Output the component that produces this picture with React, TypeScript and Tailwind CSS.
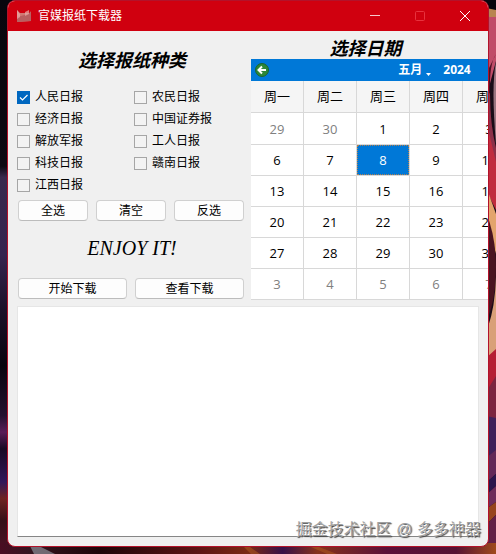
import React, { useState } from 'react';
import { clsx } from 'clsx';

const papers = [
    '人民日报', '农民日报',
    '经济日报', '中国证券报',
    '解放军报', '工人日报',
    '科技日报', '赣南日报',
    '江西日报',
];

const weekdays = ['周一', '周二', '周三', '周四', '周五', '周六', '周日'];
const months = ['一月', '二月', '三月', '四月', '五月', '六月', '七月', '八月', '九月', '十月', '十一月', '十二月'];

const weeks = [
    [29, 30, 1, 2, 3, 4, 5],
    [6, 7, 8, 9, 10, 11, 12],
    [13, 14, 15, 16, 17, 18, 19],
    [20, 21, 22, 23, 24, 25, 26],
    [27, 28, 29, 30, 31, 1, 2],
    [3, 4, 5, 6, 7, 8, 9],
];

const Wallpaper: React.FC = () => (
    <svg className="absolute inset-0 -z-10 h-full w-full" viewBox="0 0 496 554" preserveAspectRatio="none" aria-hidden="true">
        <defs>
            <linearGradient id="left" x1="0" y1="0" x2="0" y2="1">
                <stop offset="0" stopColor="#08060d" />
                <stop offset="0.3" stopColor="#0c0911" />
                <stop offset="0.32" stopColor="#382a4d" />
                <stop offset="0.46" stopColor="#35244f" />
                <stop offset="0.56" stopColor="#1b1028" />
                <stop offset="0.66" stopColor="#08040d" />
                <stop offset="0.75" stopColor="#24102f" />
                <stop offset="0.78" stopColor="#5a1c58" />
                <stop offset="0.81" stopColor="#180a24" />
                <stop offset="0.87" stopColor="#31165a" />
                <stop offset="0.9" stopColor="#6e2220" />
                <stop offset="0.94" stopColor="#351018" />
                <stop offset="1" stopColor="#501026" />
            </linearGradient>
            <linearGradient id="bottom">
                <stop offset="0" stopColor="#4a0d22" />
                <stop offset="0.06" stopColor="#351520" />
                <stop offset="0.2" stopColor="#1d0408" />
                <stop offset="0.4" stopColor="#5c1414" />
                <stop offset="0.5" stopColor="#7a2a14" />
                <stop offset="0.57" stopColor="#371048" />
                <stop offset="0.64" stopColor="#85321c" />
                <stop offset="0.78" stopColor="#5a1038" />
                <stop offset="0.92" stopColor="#551233" />
                <stop offset="1" stopColor="#a04a1c" />
            </linearGradient>
        </defs>
        <path fill="url(#left)" d="M0 0h20v554H0z" />
        <path fill="#08060d" d="M476 0h20v11l-8-3h-12z" />
        <path fill="#b98550" d="M486 8l10 2v9l-10-3z" />
        <path fill="#c04c68" d="M480 17h16v44l-8 30h-8z" />
        <path fill="#4c1024" d="M496 54q-7 10-6 40q0 30 6 54l-8-8V70z" />
        <path fill="#9b7480" d="M496 62q-5 24 0 82z" />
        <path fill="#8c3048" d="M486 88l4 6q0 30 6 54v20l-10-34z" />
        <path fill="#c02c3e" d="M486 120l10 42v48l-10-20z" />
        <path fill="#e3a46c" d="M486 186l10 28v40l-8-28z" />
        <path fill="#4a1420" d="M486 212q10 25 10 55q0 34-10 55z" />
        <path fill="#d9a078" d="M496 277v75l-8 9v-34q7-20 8-50z" />
        <path fill="#b51e34" d="M486 358l10-9v29l-10 22z" />
        <path fill="#7c2440" d="M486 392l10-16v46h-10z" />
        <path fill="#40205a" d="M486 416l10 2v36l-10 5z" />
        <path fill="#632858" d="M486 458l10-8v24l-10 9z" />
        <path fill="#2c154c" d="M486 483l10-9v12l-10 9z" />
        <path fill="#6e2c5a" d="M486 495l10-9v16l-10 7z" />
        <path fill="#97441c" d="M486 509l10-7v13l-10 10z" />
        <path fill="#632046" d="M486 525l10-10v39h-10z" />
        <path fill="url(#bottom)" d="M0 543h496v11H0z" />
        <path fill="#9da3ad" d="M30 546h9l16 8H34z" opacity="0.6" />
        <path fill="#a85520" d="M244 547h6l10 7h-9zM311 547h8l18 7h-10z" opacity="0.6" />
    </svg>
);

const AppIcon: React.FC = () => (
    <svg className="h-4 w-4" viewBox="0 0 16 16" aria-hidden="true">
        <path fill="#d07874" d="M1 2l3 3h10l1-2v10l-14 1z" />
        <path fill="#b85f60" d="M1 9q7-1 14-5v9L1 14z" />
        <path fill="#e9aea8" d="M1 2l3 4v3L1 11zM9 4l4-2v4L9 8z" opacity="0.7" />
    </svg>
);

interface PushButtonProps { children: React.ReactNode; onClick?: () => void }

const PushButton: React.FC<PushButtonProps> = ({ children, onClick }) => (
    <button
        type="button"
        onClick={onClick}
        className="h-[21px] flex-1 rounded border border-[#d0d0d0] border-b-[#bcbcbc] bg-[#fdfdfd] pt-px text-xs leading-none text-black hover:bg-[#e5f1fb]"
    >
        {children}
    </button>
);

const Calendar: React.FC = () => {
    const [selected, setSelected] = useState('1-2');
    const [month, setMonth] = useState('五月');

    return (
        <div className="w-[371px] bg-white">
            <div className="flex h-[22px] items-center justify-between bg-[#0078d7] pl-1 pr-2 text-white">
                <button type="button" aria-label="上个月">
                    <svg className="h-[14px] w-[14px]" viewBox="0 0 14 14">
                        <circle cx="7" cy="7" r="6.5" fill="#2d8736" stroke="#1c6530" />
                        <path d="M11 7H4M7 3.500L3.500 7L7 10.500" fill="none" stroke="#fff" strokeWidth="2" />
                    </svg>
                </button>
                <div className="flex items-center gap-3 text-xs font-bold">
                    <div className="flex items-center">
                        <select
                            aria-label="月份"
                            value={month}
                            onChange={(e) => setMonth(e.target.value)}
                            className="w-7 appearance-none bg-transparent leading-4"
                        >
                            {months.map((m) => <option key={m} className="text-black">{m}</option>)}
                        </select>
                        <svg className="mt-2 h-[3px] w-[5px]" viewBox="0 0 5 3" aria-hidden="true">
                            <path d="M0 0h5L2.500 3z" fill="#fff" />
                        </svg>
                    </div>
                    <button type="button" className="font-['Open_Sans',sans-serif] leading-4">2024</button>
                </div>
                <button type="button" aria-label="下个月">
                    <svg className="h-[14px] w-[14px]" viewBox="0 0 14 14">
                        <circle cx="7" cy="7" r="6.5" fill="#2d8736" stroke="#1c6530" />
                        <path d="M3 7h7M7 3.500L10.500 7L7 10.500" fill="none" stroke="#fff" strokeWidth="2" />
                    </svg>
                </button>
            </div>
            <table className="w-full table-fixed border-separate border-spacing-0 text-center text-[13px] leading-5">
                <thead>
                    <tr className="h-8 bg-[#f5f5f5]">
                        {weekdays.map((day) => (
                            <th key={day} scope="col" className="border-r border-b border-[#d8d8d8] p-0 font-normal">{day}</th>
                        ))}
                    </tr>
                </thead>
                <tbody className="font-['Open_Sans',sans-serif]">
                    {weeks.map((week, row) => (
                        <tr key={row}>
                            {week.map((day, col) => {
                                const id = `${row}-${col}`;
                                const outside = (row === 0 && day > 7) || (row > 3 && day < 10);
                                return (
                                    <td key={id} className="border-r border-b border-[#d8d8d8] p-0">
                                        <button
                                            type="button"
                                            onClick={() => setSelected(id)}
                                            className={clsx(
                                                'block w-full',
                                                row === 0 ? 'h-[31px]' : 'h-[30px]',
                                                id === selected ? 'border border-dotted border-[#b08050] bg-[#0078d7] text-white'
                                                    : outside ? 'text-[#808080]'
                                                        : col > 4 ? 'text-[#ff0000]' : 'text-black',
                                            )}
                                        >
                                            {day}
                                        </button>
                                    </td>
                                );
                            })}
                        </tr>
                    ))}
                </tbody>
            </table>
        </div>
    );
};

const App: React.FC = () => {
    const [checked, setChecked] = useState<string[]>(['人民日报']);

    const toggle = (name: string) => {
        setChecked(checked.includes(name) ? checked.filter((p) => p !== name) : [...checked, name]);
    };

    return (
        <div className="relative isolate flex min-h-screen flex-col bg-[#1a0c18] px-[7px] pb-[7px] font-['Liberation_Sans','Noto_Sans_CJK_SC',sans-serif] text-black">
            <Wallpaper />
            <main className="flex flex-1 flex-col overflow-hidden rounded-lg border border-[#b3122a] bg-[#f0f0f0]">
                <header className="flex h-[30px] shrink-0 items-center bg-[#d0000f] pl-2 text-white">
                    <AppIcon />
                    <h1 className="ml-[6px] flex-1 text-xs">官媒报纸下载器</h1>
                    <div className="flex">
                        <button type="button" aria-label="最小化" className="flex w-[45px] justify-center">
                            <svg className="h-[10px] w-[10px]" viewBox="0 0 10 10"><path d="M0 4.500h10" stroke="#f8c8cc" /></svg>
                        </button>
                        <button type="button" aria-label="最大化" disabled className="flex w-[45px] justify-center">
                            <svg className="h-[10px] w-[10px]" viewBox="0 0 10 10">
                                <rect x="0.500" y="0.500" width="9" height="9" rx="1" fill="none" stroke="#e8323e" />
                            </svg>
                        </button>
                        <button type="button" aria-label="关闭" className="flex w-[46px] justify-center">
                            <svg className="h-[10px] w-[10px]" viewBox="0 0 10 10"><path d="M0 0l10 10M10 0L0 10" stroke="#fff" /></svg>
                        </button>
                    </div>
                </header>

                <div className="flex pl-[9px]">
                    <section className="w-[234px] shrink-0">
                        <h2 className="flex h-[55px] items-center justify-center pr-1 pt-1 text-lg font-bold italic">选择报纸种类</h2>
                        <div className="grid grid-cols-2">
                            {papers.map((name) => (
                                <label key={name} className="flex h-[22px] items-center gap-[5px] text-xs">
                                    <span className="relative flex">
                                        <input
                                            type="checkbox"
                                            checked={checked.includes(name)}
                                            onChange={() => toggle(name)}
                                            className="peer h-[13px] w-[13px] appearance-none border border-[#a6a6a6] bg-[#f3f3f3] checked:border-[#0067c0] checked:bg-[#0067c0]"
                                        />
                                        <svg className="pointer-events-none absolute inset-0 hidden h-[13px] w-[13px] peer-checked:block" viewBox="0 0 13 13">
                                            <path d="M3 6.500L5.500 9L10.500 4" fill="none" stroke="#fff" strokeWidth="1.200" />
                                        </svg>
                                    </span>
                                    {name}
                                </label>
                            ))}
                        </div>
                        <div className="mt-1 flex gap-2 pl-px pr-[7px]">
                            <PushButton onClick={() => setChecked(papers)}>全选</PushButton>
                            <PushButton onClick={() => setChecked([])}>清空</PushButton>
                            <PushButton onClick={() => setChecked(papers.filter((p) => !checked.includes(p)))}>反选</PushButton>
                        </div>
                        <p className="flex h-[57px] items-center justify-center pr-1 pb-1 font-['Liberation_Serif',serif] text-xl italic">
                            ENJOY IT!
                        </p>
                        <div className="flex gap-2 pl-px pr-[7px]">
                            <PushButton>开始下载</PushButton>
                            <PushButton>查看下载</PushButton>
                        </div>
                    </section>

                    <section className="min-w-0 flex-1 overflow-hidden">
                        <h2 className="h-7 pr-2 pt-2 text-center text-lg leading-5 font-bold italic">选择日期</h2>
                        <Calendar />
                    </section>
                </div>

                <div className="relative flex flex-1 flex-col px-[9px] pt-[6px] pb-[9px]">
                    <textarea
                        aria-label="下载日志"
                        readOnly
                        className="min-h-40 w-full flex-1 resize-none border border-[#e6e6e6] border-b-[#868686] bg-white p-1 text-xs outline-none"
                    />
                    <p className="absolute right-[7px] bottom-1 text-base leading-6 text-[#a0a0a0] [text-shadow:-1px_-1px_0_#fff,1px_1px_1px_#444]">
                        掘金技术社区 @ 多多神器
                    </p>
                </div>
            </main>
        </div>
    );
};

export default App;
